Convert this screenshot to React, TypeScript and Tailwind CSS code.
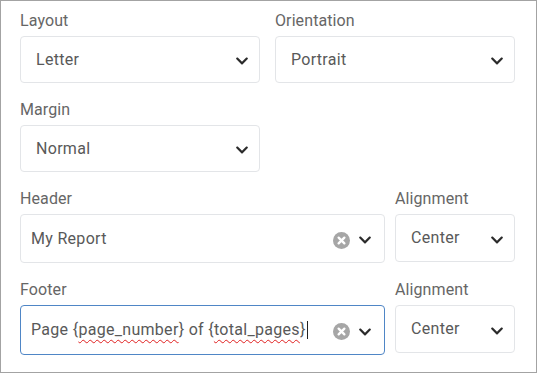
import React from "react";
import { FaChevronDown } from "react-icons/fa";

const Chevron = () => <FaChevronDown size={14} color="#2b2b2b" className="shrink-0 mt-[3px]" />;

const Clear = () => (
  <svg width="17" height="17" viewBox="0 0 16 16" className="shrink-0 mt-[3px]">
    <circle cx="8" cy="8" r="8" fill="#a6a6a6" />
    <path d="M5.3 5.3 L10.7 10.7 M10.7 5.3 L5.3 10.7" stroke="#fff" strokeWidth="2.2" strokeLinecap="round" />
  </svg>
);

const Label = ({ children }: { children: React.ReactNode }) => (
  <div className="text-[16px] leading-[20px] text-[#666666] mb-[5px] tracking-[0.1px]">{children}</div>
);

const Select = ({ value, h = "h-[47px]" }: { value: string; h?: string }) => (
  <div className={`${h} border border-[#e3e5e8] rounded-[4px] flex items-center pl-[15px] pr-[10px] bg-white`}>
    <span className="flex-1 text-[16px] leading-[20px] text-[#595959] tracking-[0.3px]">{value}</span>
    <Chevron />
  </div>
);

export default function App() {
  return (
    <div
      className="w-[537px] h-[373px] border border-[#a3a3a3] bg-white pt-[10px] pl-[19px] pr-[21px] box-border"
      style={{ fontFamily: "Roboto, 'Noto Sans', sans-serif" }}
    >
      <div className="grid grid-cols-2 gap-x-[15px]">
        <div>
          <Label>Layout</Label>
          <Select value="Letter" />
        </div>
        <div>
          <Label>Orientation</Label>
          <Select value="Portrait" />
        </div>
      </div>

      <div className="grid grid-cols-2 gap-x-[15px] mt-[17px]">
        <div>
          <Label>Margin</Label>
          <Select value="Normal" />
        </div>
      </div>

      <div className="flex gap-x-[10px] mt-[17px] items-start">
        <div className="w-[365px]">
          <Label>Header</Label>
          <div className="h-[49px] border border-[#e3e5e8] rounded-[4px] flex items-center pl-[10px] pr-[12px] bg-white">
            <span className="flex-1 text-[16px] leading-[20px] text-[#595959] tracking-[0.3px]">My Report</span>
            <Clear />
            <span className="w-[8px]" />
            <Chevron />
          </div>
        </div>
        <div className="w-[120px]">
          <Label>Alignment</Label>
          <Select value="Center" h="h-[48px]" />
        </div>
      </div>

      <div className="flex gap-x-[10px] mt-[17px] items-start">
        <div className="w-[365px]">
          <Label>Footer</Label>
          <div className="h-[50px] border border-[#4f86c6] rounded-[4px] flex items-center pl-[10px] pr-[12px] bg-white">
            <span className="flex-1 text-[16px] leading-[20px] text-[#595959] whitespace-nowrap tracking-[0.3px]">
              Page {"{"}
              <span className="underline decoration-wavy decoration-[#e02020] decoration-1 underline-offset-[4px]">page_number</span>
              {"}"} of {"{"}
              <span className="underline decoration-wavy decoration-[#e02020] decoration-1 underline-offset-[4px]">total_pages</span>
              {"}"}
              <span className="inline-block w-px h-[18px] bg-[#222] align-[-4px] ml-[1px]" />
            </span>
            <Clear />
            <span className="w-[8px]" />
            <Chevron />
          </div>
        </div>
        <div className="w-[120px]">
          <Label>Alignment</Label>
          <Select value="Center" h="h-[48px]" />
        </div>
      </div>
    </div>
  );
}
